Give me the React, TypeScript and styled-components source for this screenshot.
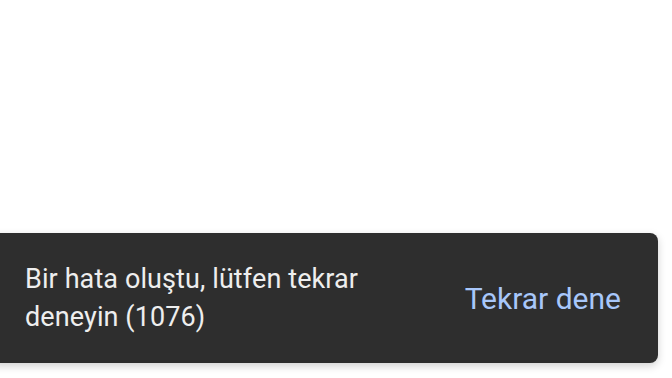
import React from 'react'
import styled, { createGlobalStyle } from 'styled-components'

const GlobalStyle = createGlobalStyle`
  html, body {
    margin: 0;
    padding: 0;
    background: #ffffff;
    overflow: hidden;
  }
  body {
    font-family: Roboto, "Noto Sans", Arial, sans-serif;
  }
`

const Page = styled.div`
  height: 100vh;
  display: flex;
  flex-direction: column;
  justify-content: flex-end;
  padding-bottom: 15px;
  box-sizing: border-box;
`

const Snackbar = styled.div`
  margin-left: -12px;
  width: 670px;
  height: 130px;
  box-sizing: border-box;
  display: flex;
  align-items: center;
  justify-content: space-between;
  padding: 0 37px 0 37px;
  background: #2e2e2e;
  border-radius: 8px;
  box-shadow: 0 3px 8px rgba(0, 0, 0, 0.18);
`

const Message = styled.p`
  margin: 0;
  width: 380px;
  color: #eeeeee;
  font-size: 27px;
  line-height: 38px;
  letter-spacing: 0.1px;
`

const ActionButton = styled.button`
  background: none;
  border: none;
  padding: 0;
  color: #a8c7fa;
  font-family: inherit;
  font-size: 30px;
  cursor: pointer;
`

export default function App() {
  return (
    <>
      <GlobalStyle />
      <Page>
        <Snackbar>
          <Message>Bir hata oluştu, lütfen tekrar deneyin (1076)</Message>
          <ActionButton>Tekrar dene</ActionButton>
        </Snackbar>
      </Page>
    </>
  )
}
